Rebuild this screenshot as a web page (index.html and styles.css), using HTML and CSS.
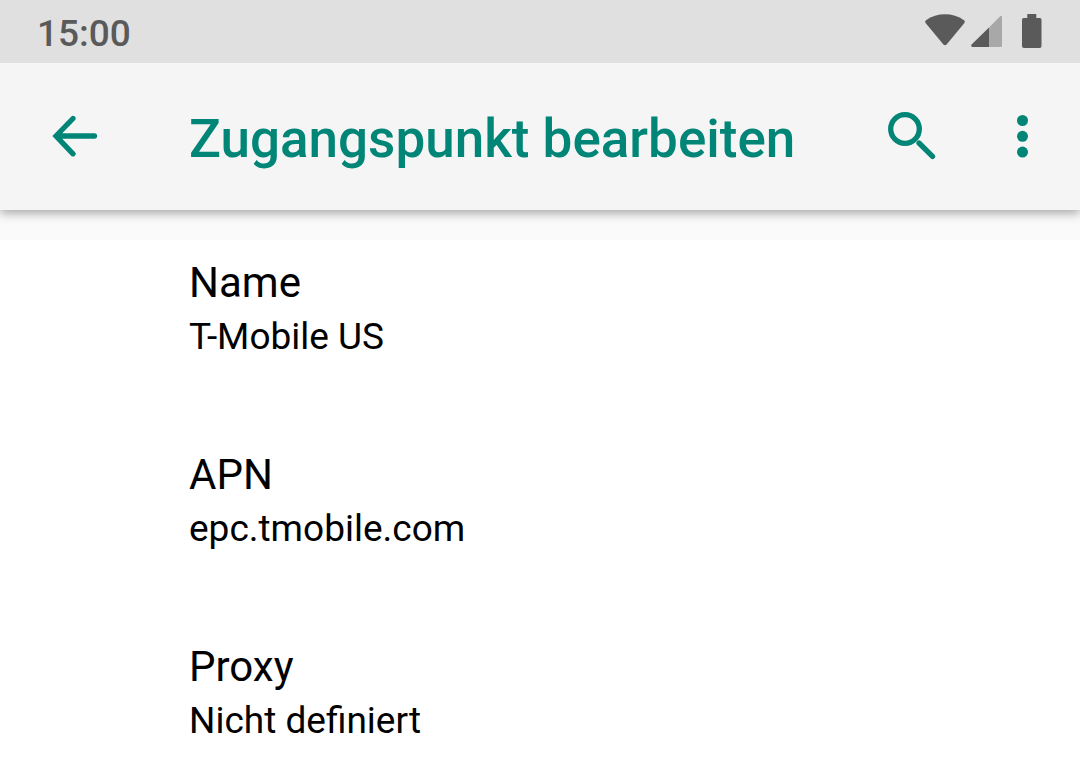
FILE: index.html
```html
<!DOCTYPE html>
<html lang="de">
<head>
<meta charset="utf-8">
<meta name="viewport" content="width=device-width, initial-scale=1">
<title>Zugangspunkt bearbeiten</title>
<link rel="stylesheet" href="styles.css">
</head>
<body>
<div class="status-bar">
  <time class="clock">15:00</time>
  <div class="status-icons">
    <svg class="wifi" viewBox="0 0 40 34" aria-hidden="true"><path d="M1 6.2C12-1.6 28-1.6 39 6.2Q40.4 7.4 39.4 9L21.6 30.4Q20 32 18.4 30.4L.6 9Q-.4 7.4 1 6.2Z"/></svg>
    <svg class="signal" viewBox="0 0 32 34" aria-hidden="true"><path class="dim" d="M18 13.5L29.2 2.2Q31 1 31 3V31.5Q31 33 29.5 33H18Z"/><path d="M18 13.5V33H1.5Q-.7 32.3.6 30.6Z"/></svg>
    <svg class="battery" viewBox="0 0 20 34" aria-hidden="true"><path d="M5.3 0H14.3V4H18Q19.5 4 19.5 5.7V32Q19.5 34 17.7 34H2Q0 34 0 32V5.7Q0 4 1.7 4H5.3Z"/></svg>
  </div>
</div>
<header class="app-bar">
  <button class="icon-button back" type="button" aria-label="Zurück">
    <svg viewBox="0 0 48 48" aria-hidden="true"><path class="line" d="M43.5 24H7M22 6.5L5 24L22 41.8"/></svg>
  </button>
  <h1 class="title">Zugangspunkt bearbeiten</h1>
  <button class="icon-button" type="button" aria-label="Suchen">
    <svg viewBox="0 0 48 48" aria-hidden="true"><circle class="line" cx="17" cy="17" r="14.3"/><path class="line" d="M31 31L44.5 44.4"/></svg>
  </button>
  <button class="icon-button more" type="button" aria-label="Weitere Optionen">
    <svg viewBox="0 0 48 48" aria-hidden="true"><circle cx="24.5" cy="8.5" r="5.5"/><circle cx="24.5" cy="24.3" r="5.5"/><circle cx="24.5" cy="40.1" r="5.5"/></svg>
  </button>
</header>
<main class="content">
  <dl class="settings">
    <div class="setting"><dt>Name</dt><dd>T-Mobile US</dd></div>
    <div class="setting"><dt>APN</dt><dd>epc.tmobile.com</dd></div>
    <div class="setting"><dt>Proxy</dt><dd>Nicht definiert</dd></div>
  </dl>
</main>
</body>
</html>
```
FILE: styles.css
```css
* { box-sizing: border-box; }
body { margin: 0; background: #fff; color: #000; font-family: Roboto, sans-serif; }
svg { display: block; flex: none; }
.status-bar { position: relative; z-index: 1; display: flex; align-items: center; justify-content: space-between; height: 63px; padding: 0 38px 0 37px; background: #e0e0e0; color: #5a5a5a; }
.clock { font-size: 37px; font-weight: 500; line-height: 44px; padding-top: 4px; }
.status-icons { display: flex; align-items: center; padding-bottom: 1px; fill: #5a5a5a; }
.wifi { width: 40px; height: 34px; }
.signal { width: 32px; height: 34px; margin: 0 19px 0 6px; }
.battery { width: 20px; height: 34px; }
.dim { fill: #a8a8a8; }
.app-bar { position: relative; display: flex; align-items: center; height: 147px; padding: 0 34px 1px 51px; background: #f5f5f5; color: #008577; box-shadow: 0 3px 10px rgba(0, 0, 0, 0.35); }
.title { flex: 1; margin: 0 0 0 90px; padding-top: 5px; font-size: 53px; font-weight: 500; line-height: 62px; white-space: nowrap; }
.icon-button { width: 48px; height: 48px; padding: 0; border: 0; background: none; color: inherit; }
.icon-button svg { width: 48px; height: 48px; fill: currentColor; }
.more { margin-left: 62px; }
.icon-button .line { fill: none; stroke: currentColor; stroke-width: 5.3; stroke-linecap: round; }
.content { border-top: 30px solid #fafafa; }
.settings { margin: 0; }
.setting { min-height: 192px; padding: 17px 48px 0 189px; }
dt { font-size: 42px; line-height: 52px; }
dd { margin: 0; font-size: 37px; line-height: 56px; }
```
